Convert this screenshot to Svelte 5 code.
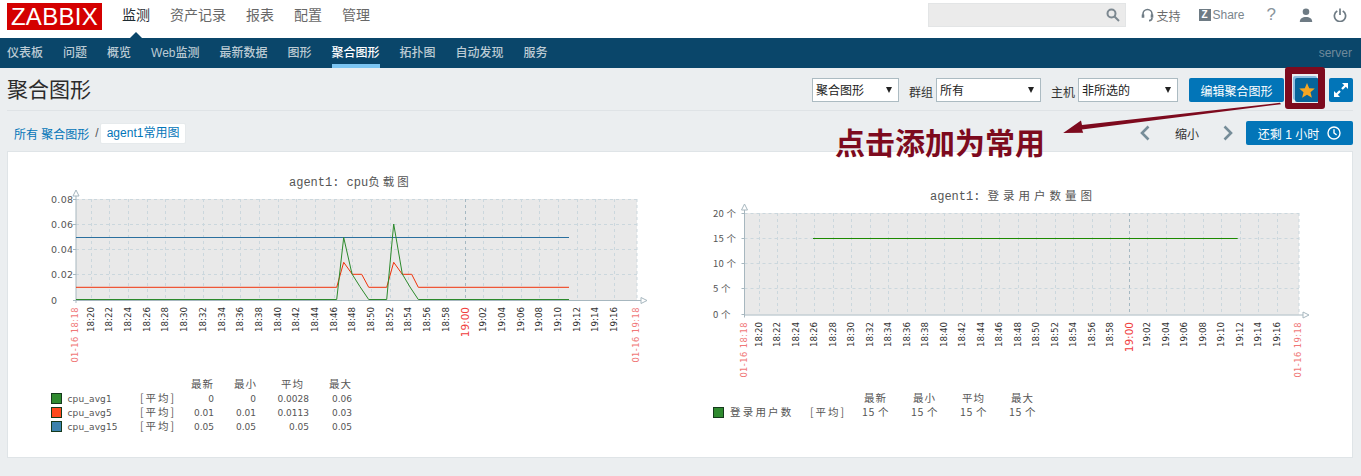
<script>
  const menu = ["监测", "资产记录", "报表", "配置", "管理"];
  const subnav = ["仪表板", "问题", "概览", "Web监测", "最新数据", "图形", "聚合图形", "拓扑图", "自动发现", "服务"];

  // 18:20 .. 19:16, every two minutes
  const ticks = [];
  for (let i = 0; i <= 28; i++) {
    const m = 20 + i * 2;
    const h = 18 + Math.floor(m / 60);
    ticks.push(`${h}:${String(m % 60).padStart(2, "0")}`);
  }

  const cpu = {
    left: 76, right: 637, top: 199, bottom: 300, firstTick: 90.7, step: 18.69, labelTop: 307,
    rows: [
      ["0.08", 199], ["0.06", 224.3], ["0.04", 249.3], ["0.02", 274.3], ["0", 300],
    ],
    labelX: 51,
  };
  const users = {
    left: 744.5, right: 1299, top: 213, bottom: 314.5, firstTick: 758.7, step: 18.5, labelTop: 322,
    rows: [
      ["20 个", 213], ["15 个", 238.3], ["10 个", 263.3], ["5 个", 288.3], ["0 个", 314],
    ],
    labelX: 713,
  };

  const green = "76,299.5 336.7,299.5 343.7,237.5 352,274 360,286.7 368.7,299.5 386.7,299.5 393.7,224 402.3,274 410,287 418.3,299.5 569,299.5";
  const red = "76,287.3 336.7,287.3 343.7,262.3 352.3,274.3 361.7,274.3 368.7,287.3 386.7,287.3 393.7,262.3 402.3,274.3 411.7,274.3 418.3,287.3 569,287.3";

  const cpuHead = [["最新", 214], ["最小", 257], ["平均", 304], ["最大", 352]];
  const cpuRows = [
    { name: "cpu_avg1", color: "#2f8a2f", y: 398, vals: ["0", "0", "0.0028", "0.06"] },
    { name: "cpu_avg5", color: "#ff4a1e", y: 412, vals: ["0.01", "0.01", "0.0113", "0.03"] },
    { name: "cpu_avg15", color: "#3c82ad", y: 426, vals: ["0.05", "0.05", "0.05", "0.05"] },
  ];
  const cpuCols = [214, 256, 309, 352];
  const userHead = [["最新", 887], ["最小", 936], ["平均", 985], ["最大", 1034]];
  const userCols = [889, 938, 987, 1036];
</script>

<div class="page">
  <header class="top">
    <div class="logo">ZABBIX</div>
    <nav class="menu">
      {#each menu as item, i}
        <a class:active={i === 0} href="#top">{item}</a>
      {/each}
    </nav>
    <div class="tools">
      <div class="search">
        <svg width="14" height="14" viewBox="0 0 14 14" fill="none" stroke="#7c8890" stroke-width="2">
          <circle cx="5.5" cy="5.5" r="4" />
          <path d="M8.5 8.5 13 13" />
        </svg>
      </div>
      <a class="tool support" href="#top">
        <svg width="13" height="14" viewBox="0 0 13 14" fill="none" stroke="#6e7b84" stroke-width="1.6">
          <path d="M2 8V6a4.5 4.5 0 0 1 9 0v2" />
          <path d="M2 6.5v3.2M11 6.5v3.2" stroke-width="2.6" />
          <path d="M11 10c0 2-2 2.6-3 2.6" />
        </svg>
        支持
      </a>
      <a class="tool share" href="#top"><span class="zmark">Z</span>Share</a>
      <a class="tool help" href="#top">?</a>
      <svg class="user" width="14" height="14" viewBox="0 0 14 14" fill="#6e7b84">
        <circle cx="7" cy="3.8" r="3.3" />
        <path d="M0.8 14c0-3.6 2.6-5 6.2-5s6.2 1.4 6.2 5z" />
      </svg>
      <svg class="power" width="14" height="14" viewBox="0 0 14 14" fill="none" stroke="#6e7b84" stroke-width="1.7">
        <path d="M4.3 3a5.6 5.6 0 1 0 5.4 0" />
        <path d="M7 0.5v6.5" />
      </svg>
    </div>
    <span class="caret"></span>
  </header>

  <nav class="subnav">
    {#each subnav as item, i}
      <a class:active={i === 6} href="#top">{item}</a>
    {/each}
    <span class="server">server</span>
  </nav>

  <section class="titlebar">
    <h1>聚合图形</h1>
    <form class="filters">
      <div class="select s1"><span>聚合图形</span></div>
      <label for="group">群组</label>
      <div class="select s2" id="group"><span>所有</span></div>
      <label for="host">主机</label>
      <div class="select s3" id="host"><span>非所选的</span></div>
      <button type="button" class="btn edit">编辑聚合图形</button>
      <button type="button" class="btn icon star" aria-label="添加为常用">
        <svg width="16" height="15" viewBox="0 0 16 15" fill="#f5a623">
          <path d="M8 0l2.2 5.2 5.6.4-4.3 3.6 1.4 5.5L8 11.8 3.1 14.7l1.4-5.5L.2 5.6l5.6-.4z" />
        </svg>
      </button>
      <button type="button" class="btn icon full" aria-label="全屏">
        <svg width="16" height="16" viewBox="0 0 16 16" fill="#fff">
          <path d="M9 1h6v6l-2.2-2.2-3 3-1.6-1.6 3-3zM7 15H1V9l2.2 2.2 3-3 1.6 1.6-3 3z" />
        </svg>
      </button>
    </form>
  </section>

  <section class="crumbs">
    <div class="path">
      <a href="#top">所有 聚合图形</a>
      <span class="sep">/</span>
      <a class="tab" href="#top">agent1常用图</a>
    </div>
    <div class="zoom">
      <svg class="chev" width="10" height="16" viewBox="0 0 10 16" fill="none" stroke="#768d99" stroke-width="2.6">
        <path d="M8.5 1.5 2 8l6.5 6.5" />
      </svg>
      <span>缩小</span>
      <svg class="chev" width="10" height="16" viewBox="0 0 10 16" fill="none" stroke="#768d99" stroke-width="2.6">
        <path d="M1.5 1.5 8 8l-6.5 6.5" />
      </svg>
      <button type="button" class="btn range">
        还剩 1 小时
        <svg width="14" height="14" viewBox="0 0 14 14" fill="none" stroke="#fff" stroke-width="1.4">
          <circle cx="7" cy="7" r="6" />
          <path d="M7 3.2V7l2.6 1.8" />
        </svg>
      </button>
    </div>
  </section>

  <main class="panel">
    <svg class="chart" width="673" height="305" viewBox="8 152 673 305">
      {@render plot(cpu)}
      <text class="title" x="289" y="186">agent1: cpu<tspan class="cjk" letter-spacing="3" font-size="11.5">负载图</tspan></text>
      <polyline class="line" points="76,237.5 569,237.5" stroke="#2a6f9e" />
      <polyline class="line" points={red} stroke="#f0320a" />
      <polyline class="line" points={green} stroke="#2c8a2c" />

      {#each cpuHead as [label, end]}
        <text class="cjk legend" x={end} y="388" text-anchor="end" letter-spacing="1">{label}</text>
      {/each}
      {#each cpuRows as row}
        <rect class="swatch" x="51.5" y={row.y - 4.5} width="10" height="10" fill={row.color} />
        <text class="num" x="67.5" y={row.y + 3.5} letter-spacing=".15">{row.name}</text>
        <text class="cjk legend" x="140" y={row.y + 4} letter-spacing="2">[平均]</text>
        {#each row.vals as val, i}
          <text class="num" x={cpuCols[i]} y={row.y + 3.5} text-anchor="end">{val}</text>
        {/each}
      {/each}
    </svg>

    <svg class="chart" width="672" height="305" viewBox="681 152 672 305">
      {@render plot(users)}
      <text class="title" x="930" y="200">agent1: <tspan class="cjk" letter-spacing="4" font-size="11.5">登录用户数量图</tspan></text>
      <polyline class="line" points="813,238.5 1237.7,238.5" stroke="#1c8a00" />

      {#each userHead as [label, end]}
        <text class="cjk legend" x={end} y="402" text-anchor="end" letter-spacing="1">{label}</text>
      {/each}
      <rect class="swatch" x="713.5" y="407.5" width="10" height="10" fill="#2f8a2f" />
      <text class="cjk legend" x="730" y="416" letter-spacing="2.2">登录用户数</text>
      <text class="cjk legend" x="810" y="416" letter-spacing="2">[平均]</text>
      {#each userCols as end}
        <text class="cjk legend" x={end} y="416" text-anchor="end" letter-spacing=".6">15 个</text>
      {/each}
    </svg>
  </main>

  <!-- annotation drawn over the screenshot -->
  <div class="frame"></div>
  <svg class="arrow" width="230" height="40" viewBox="0 0 230 40" fill="#7d0a1e">
    <path d="M219 2.2 20 27.5l1.2 3.2-20 0.3L19 18.5l1 4.5L218 0.8z" />
  </svg>
  <div class="note">点击添加为常用</div>
</div>

{#snippet plot(c)}
  <rect x={c.left} y={c.top} width={c.right - c.left} height={c.bottom - c.top} fill="#e9e9e9" />
  {#each c.rows as [label, y], i}
    {#if i < c.rows.length - 1}
      <line class="grid" x1={c.left} x2={c.right} y1={Math.round(y) + 0.5} y2={Math.round(y) + 0.5} />
    {/if}
    <text class={label.includes("个") ? "cjk axis" : "num axis"} x={c.labelX} y={y + 3.5} letter-spacing=".3">{label}</text>
    <line class="axisline" x1={c.left - 3} x2={c.left} y1={Math.round(y) + 0.5} y2={Math.round(y) + 0.5} />
  {/each}
  {#each ticks as tick, i}
    {@const x = c.firstTick + i * c.step}
    {@const gx = Math.round(x) + 0.5}
    <line class={tick === "19:00" ? "grid major" : "grid"} x1={gx} x2={gx} y1={c.top} y2={c.bottom} />
    {#if tick === "19:00"}
      <text class="num hour" transform="translate({x + 4} {c.labelTop}) rotate(-90)" text-anchor="end">{tick}</text>
    {:else}
      <text class="num tick" transform="translate({x + 3} {c.labelTop}) rotate(-90)" text-anchor="end">{tick}</text>
    {/if}
  {/each}
  <line class="grid" x1={c.right} x2={c.right} y1={c.top} y2={c.bottom} />
  <text class="num edge" transform="translate({c.left + 2} {c.labelTop}) rotate(-90)" text-anchor="end">01-16 18:18</text>
  <text class="num edge" transform="translate({c.right + 2} {c.labelTop}) rotate(-90)" text-anchor="end">01-16 19:18</text>
  <line class="axisline" x1={c.left} x2={c.left} y1={c.top - 3} y2={c.bottom + 3} />
  <line class="axisline" x1={c.left} x2={c.right + 4} y1={c.bottom + 0.5} y2={c.bottom + 0.5} />
  <path class="head" d="M{c.left - 3} {c.top - 3}h6l-3 -6z" />
  <path class="head" d="M{c.right + 4} {c.bottom - 2.5}v6l6 -3z" />
{/snippet}

<style>
  :global(body) {
    margin: 0;
    background: #ebeef0;
    font-family: "Liberation Sans", "Noto Sans CJK SC", sans-serif;
    font-size: 12px;
    color: #1f2c33;
  }

  a {
    text-decoration: none;
    color: inherit;
  }

  .page {
    position: relative;
    height: 476px;
    overflow: hidden;
  }

  .top {
    position: relative;
    display: flex;
    align-items: flex-start;
    height: 38px;
    background: #fff;
    padding-left: 7px;
  }

  .logo {
    width: 95px;
    height: 27px;
    margin-top: 3px;
    background: #d40000;
    color: #fff;
    font-size: 24px;
    line-height: 27px;
    text-align: center;
    letter-spacing: 0.3px;
  }

  .menu {
    display: flex;
    gap: 20px;
    margin-left: 20px;
    font-size: 14px;
    line-height: 30px;
    color: #686868;
  }

  .menu .active {
    color: #1f2c33;
  }

  .caret {
    position: absolute;
    left: 130px;
    top: 32px;
    border: 6px solid transparent;
    border-top: 0;
    border-bottom-color: #0a466a;
  }

  .tools {
    display: flex;
    align-items: center;
    height: 30px;
    margin-left: auto;
    color: #6e7b84;
  }

  .search {
    box-sizing: border-box;
    display: flex;
    align-items: center;
    justify-content: flex-end;
    width: 198px;
    height: 24px;
    padding-right: 5px;
    background: #ebebeb;
    border: 1px solid #e3e5e6;
  }

  .tool {
    display: flex;
    align-items: center;
  }

  .support {
    gap: 2px;
    margin-left: 15px;
    color: #6b6b6b;
  }

  .share {
    gap: 2px;
    margin-left: 18px;
    color: #7a858c;
  }

  .zmark {
    width: 12px;
    height: 12px;
    background: #6e7b84;
    color: #fff;
    font-size: 10px;
    font-weight: 700;
    line-height: 12px;
    text-align: center;
  }

  .help {
    margin-left: 22px;
    font-size: 17px;
    color: #8a959c;
  }

  .user {
    margin-left: 23px;
  }

  .power {
    margin-left: 20px;
    margin-right: 14px;
  }

  .subnav {
    display: flex;
    gap: 20px;
    height: 30px;
    padding: 0 9px 0 7px;
    background: #0a466a;
    color: #bccbd4;
    font-size: 12px;
    line-height: 30px;
    font-weight: 500;
  }

  .subnav a {
    box-sizing: border-box;
    height: 30px;
  }

  .subnav .active {
    color: #fff;
    border-bottom: 4px solid #7cc5f2;
  }

  .server {
    margin-left: auto;
    color: #6f8a9b;
    font-weight: 400;
  }

  .titlebar {
    display: flex;
    align-items: flex-start;
    justify-content: space-between;
    box-sizing: border-box;
    height: 43px;
    margin: 0 8px 0 7px;
    border-bottom: 1px solid #dfe3e6;
  }

  h1 {
    margin: 6px 0 0;
    font-size: 21px;
    font-weight: 400;
    line-height: 32px;
    color: #2b2b2b;
  }

  .filters {
    display: flex;
    align-items: center;
    margin-top: 10px;
    height: 24px;
  }

  .filters label {
    margin: 2px 3px 0 10px;
    color: #333;
  }

  .select {
    position: relative;
    box-sizing: border-box;
    height: 24px;
    padding: 0 3px;
    background: #fff;
    border: 1px solid #acbbc2;
    line-height: 25px;
    color: #222;
  }

  .select::after {
    content: "";
    position: absolute;
    right: 6px;
    top: 8px;
    border: 3.5px solid transparent;
    border-bottom: 0;
    border-top: 6px solid #222;
  }

  .s1 {
    width: 87px;
  }

  .s2 {
    width: 105px;
  }

  .s3 {
    width: 100px;
  }

  .btn {
    box-sizing: border-box;
    height: 24px;
    padding: 0;
    background: #0275b8;
    border: 0;
    border-radius: 2px;
    color: #fff;
    font: inherit;
    display: flex;
    align-items: center;
    justify-content: center;
  }

  .edit {
    width: 95px;
    margin-left: 11px;
  }

  .icon {
    width: 24px;
  }

  .star {
    margin-left: 11px;
    background: #07649b;
    box-shadow: -2px -2px 0 #8cbce0;
  }

  .full {
    margin-left: 10px;
  }

  .crumbs {
    display: flex;
    justify-content: space-between;
    align-items: center;
    box-sizing: border-box;
    height: 40px;
    padding-top: 4px;
    margin: 0 8px 0 14px;
  }

  .path {
    display: flex;
    align-items: center;
    color: #0275b8;
  }

  .sep {
    margin: 0 1px 0 6px;
    color: #555;
  }

  .tab {
    padding: 0 6px;
    background: #fff;
    border: 1px solid #e6eaec;
    border-radius: 2px;
    line-height: 19px;
  }

  .zoom {
    display: flex;
    align-items: center;
    color: #333;
  }

  .zoom span {
    margin: 0 24px 0 25px;
  }

  .chev {
    display: block;
  }

  .range {
    gap: 8px;
    width: 107px;
    height: 24px;
    margin-left: 13px;
  }

  .panel {
    display: flex;
    box-sizing: border-box;
    height: 307px;
    margin: 0 8px 0 7px;
    background: #fff;
    border: 1px solid #dfe4e7;
  }

  .chart {
    display: block;
    flex: none;
  }

  .chart text {
    fill: #555;
  }

  .num {
    font-family: "DejaVu Sans", sans-serif;
    font-size: 9px;
  }

  .cjk {
    font-family: "Noto Sans CJK SC", sans-serif;
  }

  .axis {
    font-size: 9.5px;
  }

  .legend {
    font-size: 10.5px;
  }

  .title {
    font-family: "Liberation Mono", monospace;
    font-size: 12px;
  }

  .chart .tick {
    font-size: 8.7px;
    fill: #333;
  }

  .chart .hour {
    font-size: 10.5px;
    fill: #f03c3c;
  }

  .chart .edge {
    font-size: 8.3px;
    letter-spacing: 0.45px;
    fill: #f07878;
  }

  .grid {
    stroke: #cbd7dd;
    stroke-width: 1;
    stroke-dasharray: 3 3;
  }

  .major {
    stroke: #a5b8c2;
  }

  .axisline {
    stroke: #a7b7bf;
    stroke-width: 1;
  }

  .head {
    fill: #fff;
    stroke: #a7b7bf;
  }

  .line {
    fill: none;
    stroke-width: 1;
  }

  .swatch {
    stroke: #153a1c;
    stroke-width: 1;
  }

  .frame {
    position: absolute;
    left: 1285px;
    top: 67px;
    box-sizing: border-box;
    width: 40px;
    height: 42px;
    border: 7px solid #7d0a1e;
    border-bottom-width: 6px;
    border-radius: 3px;
  }

  .arrow {
    position: absolute;
    left: 1062px;
    top: 102px;
  }

  .note {
    position: absolute;
    left: 835px;
    top: 121px;
    color: #7d0a1e;
    font-family: "Noto Sans CJK SC", sans-serif;
    font-size: 30px;
    font-weight: 700;
    line-height: 40px;
  }
</style>
